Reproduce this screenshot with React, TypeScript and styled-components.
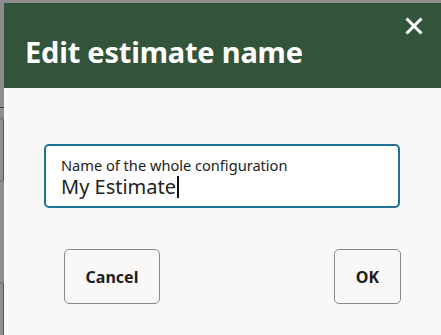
import React from "react";
import styled, { createGlobalStyle } from "styled-components";

const Global = createGlobalStyle`
  html, body { margin: 0; padding: 0; }
  body {
    background: #8e8e8e;
    width: 441px;
    height: 335px;
    overflow: hidden;
    font-family: "Noto Sans", "Open Sans", sans-serif;
  }
`;

const Backdrop = styled.div`
  display: flex;
  height: 335px;
`;

const Gutter = styled.div`
  width: 4px;
  flex: none;
  display: flex;
  flex-direction: column;
`;

const GutterLine = styled.div<{ $top: number }>`
  margin-top: ${(p) => p.$top}px;
  height: 1px;
  background: #3c3c3c;
`;

const GutterEdge = styled.div<{ $top: number; $h?: number }>`
  margin-top: ${(p) => p.$top}px;
  ${(p) => (p.$h ? `height: ${p.$h}px;` : "flex: 1;")}
  box-sizing: border-box;
  border-right: 1px solid #565656;
  border-top: 1px solid #6a6a6a;
  ${(p) => (p.$h ? "border-bottom: 1px solid #6a6a6a;" : "")}
  border-radius: 0 3px ${(p) => (p.$h ? "3px" : "0")} 0;
`;

const DialogWrap = styled.div`
  flex: 1;
  display: flex;
  padding-top: 3px;
`;

const Dialog = styled.div`
  flex: 1;
  display: flex;
  flex-direction: column;
  background: #f9f8f6;
`;

const Header = styled.div`
  position: relative;
  height: 85px;
  background: #32543b;
  display: flex;
  align-items: flex-end;
  padding: 0 0 19px 21px;
  box-sizing: border-box;
`;

const Title = styled.h1`
  margin: 0;
  color: #ffffff;
  font-family: "Noto Sans", sans-serif;
  font-weight: 700;
  font-size: 29px;
  line-height: 34px;
  letter-spacing: -0.2px;
`;

const CloseButton = styled.button`
  position: absolute;
  top: 14px;
  right: 18px;
  width: 18px;
  height: 18px;
  padding: 0;
  border: none;
  background: transparent;
  display: flex;
  align-items: center;
  justify-content: center;
  cursor: pointer;
`;

const Body = styled.div`
  flex: 1;
  display: flex;
  flex-direction: column;
  padding: 56px 41px 0 40px;
`;

const Field = styled.label`
  display: flex;
  flex-direction: column;
  height: 64px;
  box-sizing: border-box;
  background: #ffffff;
  border: 2px solid #1f7197;
  border-radius: 5px;
  padding: 11px 15px 0 15px;
`;

const FieldLabel = styled.span`
  font-family: "Noto Sans", sans-serif;
  font-size: 14.6px;
  line-height: 16px;
  color: #1d1d1d;
`;

const FieldValue = styled.span`
  display: flex;
  align-items: center;
  margin-top: 3px;
  font-family: "Noto Sans", sans-serif;
  font-size: 20px;
  line-height: 22px;
  color: #222222;
`;

const Caret = styled.span`
  display: inline-block;
  width: 2px;
  height: 22px;
  background: #111;
  margin-left: 1px;
`;

const Actions = styled.div`
  display: flex;
  justify-content: space-between;
  padding: 41px 0 0 20px;
  margin-right: -1px;
`;

const Button = styled.button<{ $w: number }>`
  width: ${(p) => p.$w}px;
  height: 55px;
  box-sizing: border-box;
  background: transparent;
  border: 1px solid #8a8a8a;
  border-radius: 5px;
  font-family: "Noto Sans", sans-serif;
  font-weight: 700;
  font-size: 16px;
  color: #1d1d1d;
  cursor: pointer;
`;

export default function App() {
  return (
    <>
      <Global />
      <Backdrop>
        <Gutter>
          <GutterLine $top={107} />
          <GutterEdge $top={10} $h={64} />
          <GutterEdge $top={100} />
        </Gutter>
        <DialogWrap>
          <Dialog>
            <Header>
              <Title>Edit estimate name</Title>
              <CloseButton aria-label="Close">
                <svg width="18" height="18" viewBox="0 0 18 18">
                  <path d="M1.5 1.5 L16.5 16.5 M16.5 1.5 L1.5 16.5" stroke="#fff" strokeWidth="3" strokeLinecap="butt" />
                </svg>
              </CloseButton>
            </Header>
            <Body>
              <Field>
                <FieldLabel>Name of the whole configuration</FieldLabel>
                <FieldValue>
                  My Estimate
                  <Caret />
                </FieldValue>
              </Field>
              <Actions>
                <Button $w={96}>Cancel</Button>
                <Button $w={67}>OK</Button>
              </Actions>
            </Body>
          </Dialog>
        </DialogWrap>
      </Backdrop>
    </>
  );
}
